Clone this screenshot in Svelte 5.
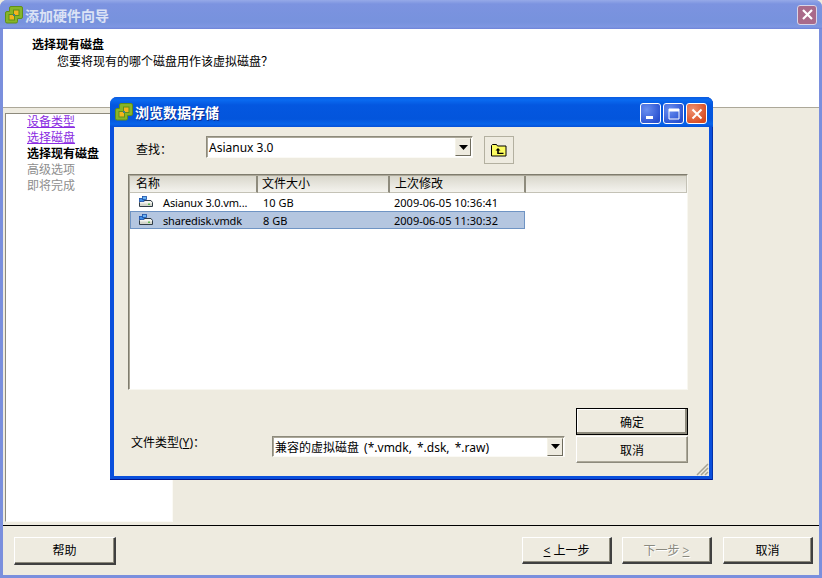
<script>
  const steps = [
    { t: '设备类型', c: 'link' },
    { t: '选择磁盘', c: 'link' },
    { t: '选择现有磁盘', c: 'cur' },
    { t: '高级选项', c: 'off' },
    { t: '即将完成', c: 'off' }
  ];
  const files = [
    { n: 'Asianux 3.0.vm...', s: '10 GB', d: '2009-06-05 10:36:41', sel: false },
    { n: 'sharedisk.vmdk', s: '8 GB', d: '2009-06-05 11:30:32', sel: true }
  ];
</script>

{#snippet logo()}
  <svg class="logo" width="18" height="18" viewBox="0 0 18 18">
    <path d="M6 0.500h10a1.500 1.500 0 0 1 1.500 1.500v9a1.500 1.500 0 0 1-1.500 1.500h-3.500v3a1.500 1.500 0 0 1-1.500 1.500H2a1.500 1.500 0 0 1-1.500-1.500V7a1.500 1.500 0 0 1 1.500-1.500h2.500V2A1.500 1.500 0 0 1 6 0.500z" fill="#86b52a" stroke="#5f8f18"/>
    <path d="M8 3.500h6.500V10H10v4.500H3.500V8H8z" fill="#5f8f18"/>
    <rect x="9" y="4.500" width="4.500" height="4.500" fill="#f4b41e"/>
    <rect x="4.500" y="9" width="4.500" height="4.500" fill="#f4b41e"/>
    <rect x="8" y="8" width="2" height="2" fill="#3f7f8c"/>
  </svg>
{/snippet}

{#snippet disk()}
  <svg width="16" height="12" viewBox="0 0 16 12">
    <path d="M1.500 6.500L3 4.500h10l1.500 2v4h-13z" fill="#f4f4ee" stroke="#2f3b46"/>
    <path d="M2 7.500h12v2.500H2z" fill="#d4d6cc"/>
    <rect x="10" y="7.500" width="2" height="1.500" fill="#5dbb52"/>
    <rect x="1.500" y="2.500" width="4.500" height="3" fill="#3f8fe8" stroke="#1a4fa8" stroke-width="0.800"/>
    <rect x="4.500" y="0.500" width="4" height="3" fill="#6ab4f4" stroke="#1a4fa8" stroke-width="0.800"/>
  </svg>
{/snippet}

{#snippet arrow()}
  <span class="drop"><svg width="9" height="5" viewBox="0 0 9 5"><path d="M0 0h9L4.500 5z" fill="#000"/></svg></span>
{/snippet}

<div class="screen">
  <section class="outer">
    <header class="o-title">
      {@render logo()}
      <span class="o-title-text">添加硬件向导</span>
      <span class="o-close">
        <svg width="13" height="13" viewBox="0 0 13 13"><path d="M2 2l9 9M11 2l-9 9" stroke="#fff" stroke-width="2.200"/></svg>
      </span>
    </header>
    <div class="o-client">
      <div class="o-head">
        <div class="h1">选择现有磁盘</div>
        <div class="h2">您要将现有的哪个磁盘用作该虚拟磁盘？</div>
      </div>
      <div class="o-body">
        <nav class="steps">
          {#each steps as s}
            <div class={s.c}>{s.t}</div>
          {/each}
        </nav>
      </div>
      <footer class="o-foot">
        <button class="btn help">帮助</button>
        <span class="spacer"></span>
        <button class="btn nav"><u>&lt;</u> 上一步</button>
        <button class="btn nav gap8 dis">下一步 <u>&gt;</u></button>
        <button class="btn nav cancel">取消</button>
      </footer>
    </div>
  </section>

  <section class="dialog">
    <header class="d-title">
      {@render logo()}
      <span class="d-title-text">浏览数据存储</span>
      <span class="caps">
        <span class="cap blue">
          <svg width="10" height="4" viewBox="0 0 10 4"><rect x="0" y="0" width="7" height="3" fill="#fff"/></svg>
        </span>
        <span class="cap blue">
          <svg width="12" height="12" viewBox="0 0 12 12"><path d="M1 1h10v10H1z" fill="none" stroke="#fff"/><rect x="1" y="1" width="10" height="2.500" fill="#fff"/></svg>
        </span>
        <span class="cap red">
          <svg width="12" height="12" viewBox="0 0 12 12"><path d="M1.500 1.500l9 9M10.500 1.500l-9 9" stroke="#fff" stroke-width="2"/></svg>
        </span>
      </span>
    </header>
    <div class="d-client">
      <div class="look">
        <span class="look-label">查找：</span>
        <div class="combo c1">
          <span class="combo-text">Asianux 3.0</span>
          {@render arrow()}
        </div>
        <span class="folder">
          <svg width="16" height="14" viewBox="0 0 16 14">
            <path d="M0.500 13V2.500l1-1h4l1 1.500h8.500V13z" fill="#fbfb60" stroke="#000"/>
            <path d="M7 5L4.500 7.500h1.700V11h6.300V9.800H7.800V7.500H9.500z" fill="#000"/>
          </svg>
        </span>
      </div>
      <div class="table">
        <div class="thead">
          <span class="th w1">名称</span>
          <span class="th w2">文件大小</span>
          <span class="th w3">上次修改</span>
          <span class="th w4"></span>
        </div>
        {#each files as f}
          <div class="row" class:sel={f.sel}>
            <span class="td w1 name">{@render disk()}<span>{f.n}</span></span>
            <span class="td w2">{f.s}</span>
            <span class="td w3">{f.d}</span>
          </div>
        {/each}
      </div>
      <div class="bottom">
        <span class="type-label">文件类型(<u>Y</u>)：</span>
        <div class="combo c2">
          <span class="combo-text wide">兼容的虚拟磁盘 (*.vmdk, *.dsk, *.raw)</span>
          {@render arrow()}
        </div>
        <div class="actions">
          <button class="btn ok">确定</button>
          <button class="btn flat">取消</button>
        </div>
      </div>
      <svg class="grip" width="14" height="14" viewBox="0 0 14 14">
        <path d="M13 2L2 13M13 6L6 13M13 10L10 13" stroke="#a5a294" stroke-width="1.500"/>
      </svg>
    </div>
  </section>
</div>

<style>
  :global(body) { margin: 0; background: #eeebe0; }
  .screen {
    position: relative;
    width: 822px;
    height: 578px;
    overflow: hidden;
    font-family: "Noto Sans", "Noto Sans CJK SC", sans-serif;
    font-size: 12px;
    color: #000;
  }
  button { font: inherit; color: inherit; padding: 0; }

  /* outer inactive window */
  .outer {
    position: absolute;
    inset: 0;
    display: flex;
    flex-direction: column;
    box-sizing: border-box;
    background: #7a8fdd;
    border-radius: 7px 7px 0 0;
    overflow: hidden;
  }
  .o-title {
    height: 29px;
    flex: none;
    display: flex;
    align-items: center;
    padding: 0 5px;
    box-sizing: border-box;
    background: linear-gradient(#96a9e8 0, #7c93e0 4px, #7792dd 22px, #7e97e2 27px, #6d82d8 29px);
  }
  .o-title-text {
    margin-left: 2px;
    color: #dbe2f5;
    font-weight: 700;
    font-size: 14px;
  }
  .o-close {
    margin-left: auto;
    width: 20px;
    height: 20px;
    box-sizing: border-box;
    border: 1px solid #d9d5e8;
    border-radius: 3px;
    background: #a96a8a;
    display: flex;
    align-items: center;
    justify-content: center;
  }
  .o-client {
    flex: 1;
    margin: 0 3px 3px 3px;
    background: #eeebe0;
    display: flex;
    flex-direction: column;
    min-height: 0;
  }
  .o-head {
    height: 79px;
    flex: none;
    box-sizing: border-box;
    background: #fff;
    border-bottom: 1px solid #aca899;
    padding: 8px 0 0 29px;
  }
  .h1 { font-weight: 700; line-height: 16px; }
  .h2 { padding-left: 25px; line-height: 17px; }
  .o-body { flex: 1; padding: 5px 0 3px 2px; min-height: 0; border-bottom: 1px solid #000; }
  .steps {
    width: 168px;
    height: 100%;
    box-sizing: border-box;
    background: #fff;
    border: 1px solid;
    border-color: #8d8a7c #fbfaf5 #fbfaf5 #8d8a7c;
    padding: 0 0 0 21px;
    line-height: 16px;
  }
  .link { color: #8a2be2; text-decoration: underline; }
  .cur { font-weight: 700; }
  .off { color: #8e8e8e; }
  .o-foot {
    height: 49px;
    flex: none;
    display: flex;
    align-items: center;
    padding: 0 6px 0 11px;
    box-sizing: border-box;
  }
  .spacer { flex: 1; }
  .btn {
    background: #eeebe0;
    border: 1px solid;
    border-color: #fff #404040 #404040 #fff;
    box-shadow: inset -1px -1px 0 #8d8a7c;
    border-width: 1px 2px 2px 1px;
    box-sizing: border-box;
    display: flex;
    align-items: center;
    justify-content: center;
    gap: 3px;
  }
  .help { width: 102px; height: 28px; }
  .nav { width: 90px; height: 27px; margin-left: 10px; }
  .nav.cancel { margin-left: 11px; }
  .dis { color: #8a8a80; text-shadow: 1px 1px 0 #fff; }

  /* browse dialog */
  .dialog {
    position: absolute;
    left: 110px;
    top: 97px;
    width: 603px;
    height: 383px;
    box-sizing: border-box;
    display: flex;
    flex-direction: column;
    background: #0a4fdc;
    border-radius: 7px 7px 0 0;
    overflow: hidden;
    box-shadow: inset -1px 0 0 #0331a8, inset 0 -1px 0 #00138c;
  }
  .d-title {
    height: 30px;
    flex: none;
    display: flex;
    align-items: center;
    padding: 0 6px 0 5px;
    box-sizing: border-box;
    background: linear-gradient(#0a5be0 0, #0a6af0 3px, #0457e0 8px, #0355dc 22px, #0764ea 27px, #0450d8 30px);
  }
  .d-title-text {
    margin-left: 2px;
    color: #fff;
    font-weight: 700;
    font-size: 14px;
    text-shadow: 1px 1px 0 #0a2f94;
  }
  .caps { margin-left: auto; margin-top: 3px; display: flex; gap: 2px; }
  .cap {
    width: 21px;
    height: 21px;
    box-sizing: border-box;
    border: 1px solid #fff;
    border-radius: 3px;
    display: flex;
    align-items: center;
    justify-content: center;
  }
  .blue { background: radial-gradient(circle at 30% 30%, #6a8ff0, #2850d0 80%); }
  .blue:first-child { align-items: flex-end; padding-bottom: 3px; }
  .red { background: radial-gradient(circle at 30% 30%, #f09070, #d84a20 80%); }
  .d-client {
    position: relative;
    flex: 1;
    margin: 0 4px 4px 4px;
    background: #eeebe0;
    display: flex;
    flex-direction: column;
    padding: 9px 21px 0 14px;
    min-height: 0;
  }
  .look { display: flex; align-items: flex-start; height: 38px; flex: none; }
  .look-label { width: 78px; padding-left: 8px; box-sizing: border-box; line-height: 28px; flex: none; }
  .combo {
    box-sizing: border-box;
    background: #fff;
    border: 1px solid;
    border-color: #8d8a7c #fbfaf5 #fbfaf5 #8d8a7c;
    box-shadow: inset 1px 1px 0 #aca899;
    display: flex;
    align-items: center;
  }
  .c1 { width: 267px; height: 22px; flex: none; }
  .combo-text { flex: 1; padding-left: 2px; white-space: nowrap; overflow: hidden; }
  .wide { word-spacing: 2px; }
  .drop {
    flex: none;
    width: 16px;
    height: 18px;
    margin-right: 1px;
    box-sizing: border-box;
    background: #eeebe0;
    border: 1px solid;
    border-color: #f5f3e8 #6f6c5e #6f6c5e #f5f3e8;
    display: flex;
    align-items: center;
    justify-content: center;
  }
  .folder {
    margin-left: 11px;
    width: 30px;
    height: 28px;
    box-sizing: border-box;
    border: 1px solid #b3b0a0;
    display: flex;
    align-items: center;
    justify-content: center;
    flex: none;
  }
  .table {
    width: 560px;
    height: 216px;
    flex: none;
    box-sizing: border-box;
    background: #fff;
    border: 1px solid;
    border-color: #7f7c6e #f8f7f0 #f8f7f0 #7f7c6e;
    box-shadow: inset 1px 1px 0 #aca899;
    padding: 1px 0 0 1px;
  }
  .thead { display: flex; height: 17px; }
  .th {
    box-sizing: border-box;
    background: linear-gradient(#d9d7cc, #f4f3ee);
    border-right: 2px solid #8e8b7d;
    border-bottom: 1px solid #c4c2b6;
    padding-left: 5px;
    line-height: 15px;
    flex: none;
  }
  .th.w1 { width: 128px; padding-left: 6px; }
  .th.w2 { width: 132px; padding-left: 4px; }
  .th.w3 { width: 136px; }
  .th.w4 { width: 161px; border-right: 1px solid #c4c2b6; }
  .row {
    display: flex;
    height: 18px;
    width: 395px;
    align-items: center;
    box-sizing: border-box;
    border: 1px solid transparent;
    font-size: 11px;
  }
  .row:first-of-type { height: 19px; }
  .row.sel { background: #b4c6e0; border-color: #6f94c4; }
  .td { flex: none; padding-left: 5px; box-sizing: border-box; white-space: nowrap; }
  .row .w1 { width: 127px; }
  .row .w2 { width: 131px; }
  .row .w3 { width: 135px; }
  .name { display: flex; align-items: center; gap: 9px; padding-left: 7px; letter-spacing: -0.15px; }
  .bottom {
    flex: 1;
    display: flex;
    align-items: flex-start;
    position: relative;
  }
  .type-label { width: 144px; flex: none; padding: 44px 0 0 3px; box-sizing: border-box; line-height: 18px; }
  .c2 { width: 293px; height: 21px; flex: none; margin-top: 46px; }
  .actions {
    flex: none;
    margin-left: 11px;
    margin-top: 18px;
    display: flex;
    flex-direction: column;
    gap: 1px;
  }
  .ok {
    width: 112px;
    height: 27px;
    border: 1px solid #000;
    box-shadow: inset -2px -2px 0 #8d8a7c, inset 1px 1px 0 #fff;
  }
  .flat {
    width: 112px;
    height: 27px;
    border: 1px solid;
    border-color: #fff #8d8a7c #8d8a7c #fff;
    box-shadow: inset -1px -1px 0 #aca899;
  }
  .grip { position: absolute; right: 0; bottom: 0; }
</style>
